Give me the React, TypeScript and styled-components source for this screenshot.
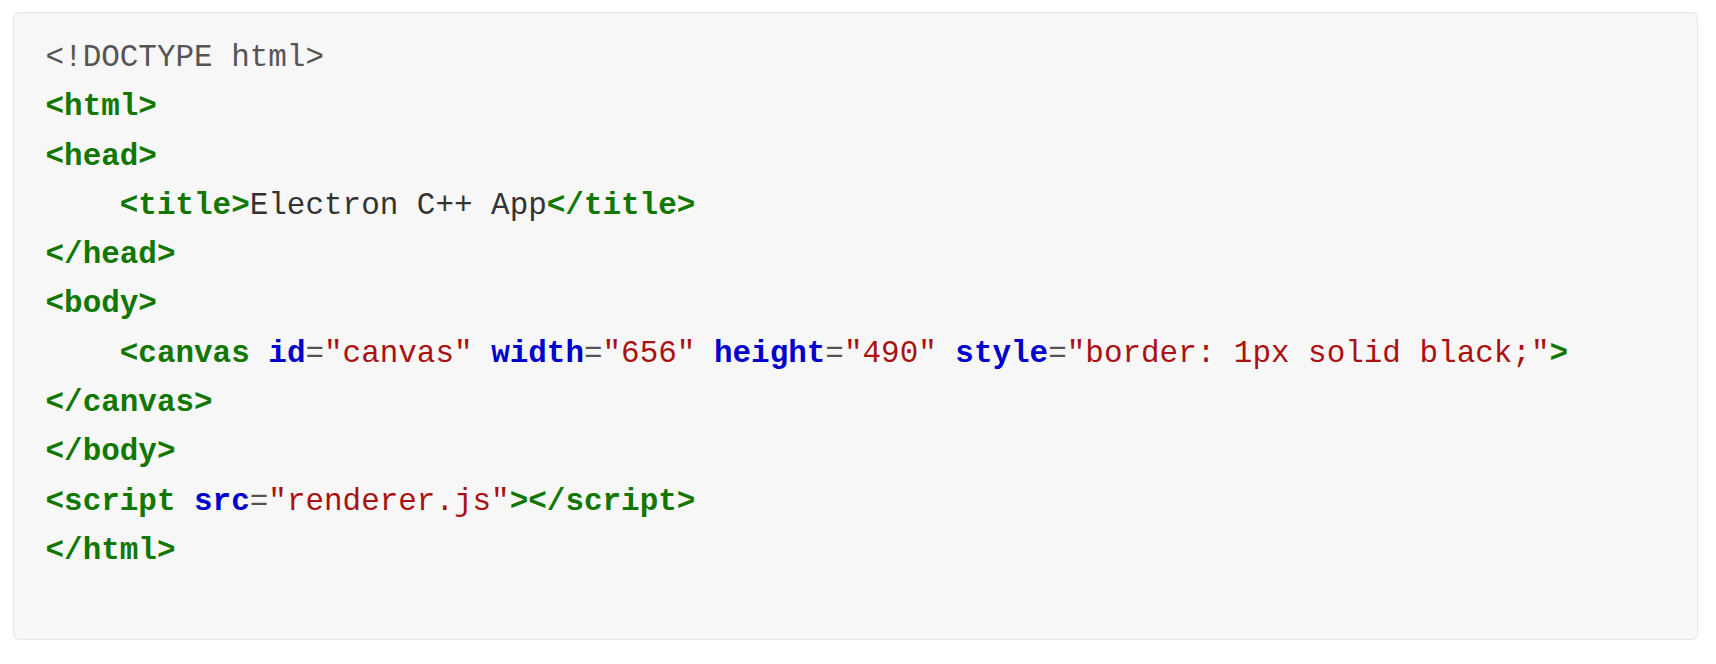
import React from "react";
import styled, { createGlobalStyle } from "styled-components";

const Global = createGlobalStyle`
  html, body { margin: 0; padding: 0; background: #ffffff; }
  body { padding: 12px 18px 24px 13px; }
`;

const CodeBox = styled.pre`
  margin: 0;
  box-sizing: border-box;
  width: 1685px;
  height: 628px;
  background: #f7f7f7;
  border: 1.5px solid #e4e7ea;
  border-radius: 6px;
  padding: 20px 30px 60px 31.5px;
  font-family: "Courier New", Courier, "Nimbus Mono PS", "Nimbus Mono L", FreeMono,
    "Liberation Mono", monospace;
  font-size: 30.95px;
  line-height: 49.28px;
  color: #333333;
  white-space: pre;
  overflow: hidden;
`;

const Line = styled.div`
  display: block;
  min-height: 49.28px;
`;

type Kind = "meta" | "tag" | "attr" | "str" | "text" | "eq";

const colors: Record<Kind, string> = {
  meta: "#555555",
  tag: "#117700",
  attr: "#0000cc",
  str: "#aa1111",
  text: "#333333",
  eq: "#555555",
};

const Tok = styled.span<{ $k: Kind }>`
  color: ${(p) => colors[p.$k]};
  font-weight: ${(p) => (p.$k === "tag" || p.$k === "attr" ? 700 : 400)};
`;

type Seg = [Kind, string];

const lines: Seg[][] = [
  [["meta", "<!DOCTYPE html>"]],
  [["tag", "<html>"]],
  [["tag", "<head>"]],
  [["text", "    "], ["tag", "<title>"], ["text", "Electron C++ App"], ["tag", "</title>"]],
  [["tag", "</head>"]],
  [["tag", "<body>"]],
  [
    ["text", "    "],
    ["tag", "<canvas"],
    ["text", " "],
    ["attr", "id"],
    ["eq", "="],
    ["str", '"canvas"'],
    ["text", " "],
    ["attr", "width"],
    ["eq", "="],
    ["str", '"656"'],
    ["text", " "],
    ["attr", "height"],
    ["eq", "="],
    ["str", '"490"'],
    ["text", " "],
    ["attr", "style"],
    ["eq", "="],
    ["str", '"border: 1px solid black;"'],
    ["tag", ">"],
  ],
  [["tag", "</canvas>"]],
  [["tag", "</body>"]],
  [
    ["tag", "<script"],
    ["text", " "],
    ["attr", "src"],
    ["eq", "="],
    ["str", '"renderer.js"'],
    ["tag", "></script>"],
  ],
  [["tag", "</html>"]],
];

export default function App() {
  return (
    <>
      <Global />
      <CodeBox>
        {lines.map((segs, i) => (
          <Line key={i}>
            {segs.map(([k, t], j) => (
              <Tok key={j} $k={k}>
                {t}
              </Tok>
            ))}
          </Line>
        ))}
      </CodeBox>
    </>
  );
}
